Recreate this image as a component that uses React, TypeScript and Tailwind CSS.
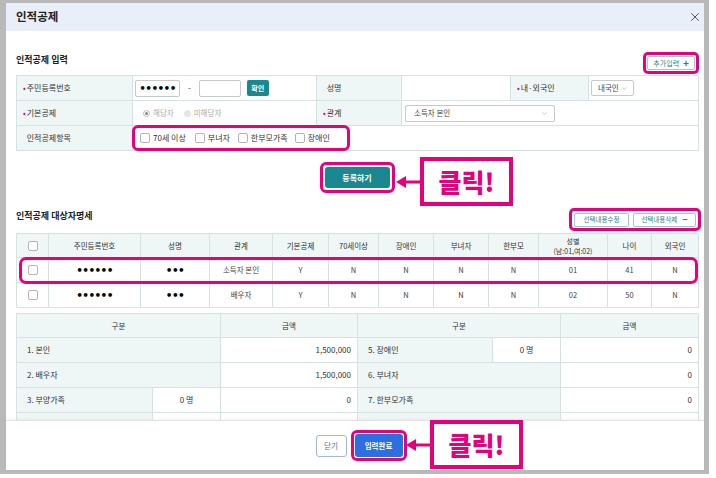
import { X, ChevronDown } from "lucide-react";

/* ── 인적공제 modal with tutorial callouts ── */

const FORM_COLS = "grid grid-cols-[116px_184px_85px_109px_78px_110px]";
const LIST_COLS = "grid grid-cols-[32px_92px_69px_63px_56px_50px_55px_55px_50px_69px_44px_47px]";
const SUM_COLS = "grid grid-cols-[136px_68px_137px_135px_68px_138px]";

function Label({ children, req = false, className = "" }: { children: React.ReactNode; req?: boolean; className?: string }) {
  return (
    <div className={`flex items-center h-[25px] bg-[#eef6f6] border-r border-b border-[#d6e2e2] pl-[6px] text-[8px] text-[#333] ${className}`}>
      <span className={`mr-[1px] text-[#e5007e] ${req ? "" : "invisible"}`}>•</span>
      {children}
    </div>
  );
}

function Cell({ children, className = "" }: { children?: React.ReactNode; className?: string }) {
  return (
    <div className={`flex items-center h-[25px] bg-white border-r border-b border-[#d6e2e2] ${className}`}>
      {children}
    </div>
  );
}

function Check({ className = "" }: { className?: string }) {
  return <span className={`block shrink-0 w-[10px] h-[10px] border border-[#b3b3b3] rounded-[2px] bg-white ${className}`} />;
}

function Dots({ n }: { n: number }) {
  return (
    <span className="font-['DejaVu_Sans',sans-serif] text-[10.5px] font-bold tracking-[-0.6px] leading-none text-black">
      {"•".repeat(n)}
    </span>
  );
}

function Arrow() {
  return (
    <svg width="24" height="14" viewBox="0 0 24 14">
      <polygon points="0,7 10,1 10,13" fill="#e5007e" />
      <rect x="9" y="5.5" width="15" height="3" fill="#e5007e" />
    </svg>
  );
}

function Callout({ className }: { className: string }) {
  return (
    <div className={`absolute flex items-center ${className}`}>
      <Arrow />
      <div className="w-[93px] h-[49px] border-[4px] border-[#e5007e] bg-white flex items-center justify-center text-[25px] font-black leading-none text-[#e5007e]">
        클릭!
      </div>
    </div>
  );
}

const listHead = ["주민등록번호", "성명", "관계", "기본공제", "70세이상", "장애인", "부녀자", "한부모"];

const people = [
  { rel: "소득자 본인", vals: ["Y", "N", "N", "N", "N", "01", "41", "N"] },
  { rel: "배우자", vals: ["Y", "N", "N", "N", "N", "02", "50", "N"] },
];

function ListRow({ p }: { p: (typeof people)[number] }) {
  const c = "flex items-center justify-center h-[25px] border-r border-b border-[#d6e2e2] text-[7.5px] text-[#444]";
  return (
    <div className={LIST_COLS}>
      <div className={c}><Check /></div>
      <div className={c}><Dots n={6} /></div>
      <div className={c}><Dots n={3} /></div>
      <div className={c}>{p.rel}</div>
      {p.vals.map((v, i) => (
        <div key={i} className={c}>{v}</div>
      ))}
    </div>
  );
}

export default function App() {
  const sh = "flex items-center justify-center h-[24px] bg-[#eef6f6] border-r border-b border-[#d6e2e2] text-[7.5px] text-[#333]";
  const sl = "flex items-center h-[25px] bg-[#eef6f6] border-r border-b border-[#d6e2e2] pl-[10px] text-[8px] text-[#333]";
  const sv = "flex items-center justify-end h-[25px] bg-white border-r border-b border-[#d6e2e2] pr-[6px] text-[8px] text-[#333]";
  const sc = "flex items-center justify-center h-[25px] bg-white border-r border-b border-[#d6e2e2] text-[8px] text-[#333]";

  return (
    <div className="relative w-[716px] h-[478px] bg-white overflow-hidden font-['Noto_Sans_CJK_KR','Noto_Sans',sans-serif]">
      <div className="w-[709px] h-[474px] flex flex-col border-l-[6px] border-t-[3px] border-r-[5px] border-b-[4px] border-[#b9b9b9]">
        {/* Header */}
        <div className="h-[28px] flex items-center justify-between bg-[#e8eff8] pl-[10px] pr-[2px]">
          <span className="text-[11.5px] font-bold text-[#222]">인적공제</span>
          <X size={14} strokeWidth={1.4} className="text-[#333]" />
        </div>

        {/* Body */}
        <div className="h-[389px] overflow-hidden pl-[10px] pr-[6px]">
          <div className="mt-[19px] h-[25px] flex justify-between">
            <span className="mt-[3px] text-[9px] font-bold leading-[14px] text-[#222]">인적공제 입력</span>
            <div className="-mr-[1px] mt-[2px] h-[22px] border-[3px] border-[#e5007e] rounded-[5px] p-px">
              <div className="h-[14px] px-[5px] flex items-center gap-[4px] border border-[#9fc9cd] rounded-[2px] bg-white text-[7px] text-[#26858e]">
                추가입력 <span className="text-[10px] font-bold leading-none">+</span>
              </div>
            </div>
          </div>

          {/* Input form */}
          <div className={`${FORM_COLS} border-t border-l border-[#d6e2e2]`}>
            <Label req>주민등록번호</Label>
            <Cell className="pl-[2px]">
              <div className="w-[45px] h-[17px] border border-[#c8c8c8] rounded-[2px] flex items-center justify-center">
                <Dots n={6} />
              </div>
              <span className="mx-[8px] text-[8px] text-[#333]">-</span>
              <div className="w-[42px] h-[17px] border border-[#c8c8c8] rounded-[2px]" />
              <div className="ml-[6px] w-[22px] h-[16px] rounded-[2px] bg-[#1b8790] flex items-center justify-center text-[7px] font-bold text-white">확인</div>
            </Cell>
            <Label>성명</Label>
            <Cell />
            <Label req>내·외국인</Label>
            <Cell className="pl-[2px]">
              <div className="w-[43px] h-[16px] border border-[#c8c8c8] rounded-[2px] flex items-center pl-[6px] gap-[2px] text-[7.5px] text-[#444]">
                내국인 <ChevronDown size={7} strokeWidth={1.5} className="text-[#888]" />
              </div>
            </Cell>

            <Label req>기본공제</Label>
            <Cell className="pl-[10px] text-[7.5px] text-[#aaa]">
              <span className="w-[7px] h-[7px] rounded-full border border-[#bbb] bg-white flex items-center justify-center">
                <span className="w-[3px] h-[3px] rounded-full bg-[#888]" />
              </span>
              <span className="ml-[3px]">해당자</span>
              <span className="ml-[10px] w-[7px] h-[7px] rounded-full bg-[#e6e6e6]" />
              <span className="ml-[3px]">미해당자</span>
            </Cell>
            <Label req>관계</Label>
            <Cell className="col-span-3 pl-[3px]">
              <div className="w-[150px] h-[17px] border border-[#c8c8c8] rounded-[2px] flex items-center justify-between pl-[8px] pr-[6px] text-[7.5px] text-[#444]">
                소득자 본인 <ChevronDown size={7} strokeWidth={1.5} className="text-[#888]" />
              </div>
            </Cell>

            <Label>인적공제항목</Label>
            <Cell className="col-span-5">
              <div className="-ml-px h-[26px] w-[218px] border-[3px] border-[#e5007e] rounded-[6px] flex items-center pl-[5px] text-[8px] text-[#333]">
                <Check />
                <span className="ml-[3px]">70세 이상</span>
                <Check className="ml-[9px]" />
                <span className="ml-[3px]">부녀자</span>
                <Check className="ml-[8px]" />
                <span className="ml-[3px]">한부모가족</span>
                <Check className="ml-[7px]" />
                <span className="ml-[3px]">장애인</span>
              </div>
            </Cell>
          </div>

          {/* Register */}
          <div className="mt-[11px] flex justify-center">
            <div className="h-[31px] border-[3px] border-[#e5007e] rounded-[6px] p-[2px]">
              <div className="h-[21px] w-[65px] rounded-[3px] bg-[#1b8790] flex items-center justify-center text-[8px] font-bold text-white">등록하기</div>
            </div>
          </div>

          {/* Target list */}
          <div className="mt-[15px] h-[23px] flex justify-between">
            <span className="mt-[1px] text-[9px] font-bold leading-[14px] text-[#222]">인적공제 대상자명세</span>
            <div className="-mr-[3px] h-[23px] border-[3px] border-[#e5007e] rounded-[5px] px-[2px] flex items-center gap-[4px]">
              <div className="h-[14px] w-[55px] flex items-center justify-center border border-[#9fc9cd] rounded-[2px] bg-white text-[6.5px] text-[#26858e]">선택내용수정</div>
              <div className="h-[14px] w-[63px] flex items-center justify-center gap-[5px] border border-[#9fc9cd] rounded-[2px] bg-white text-[6.5px] text-[#26858e]">
                선택내용삭제 <span className="text-[9px] font-bold leading-none">−</span>
              </div>
            </div>
          </div>

          <div className="mt-[2px] border-t border-l border-[#d6e2e2]">
            <div className={LIST_COLS}>
              <div className={sh}><Check /></div>
              {listHead.map((h) => (
                <div key={h} className={sh}>{h}</div>
              ))}
              <div className="flex flex-col items-center justify-center h-[24px] bg-[#eef6f6] border-r border-b border-[#d6e2e2] text-[7px] leading-[10px] text-[#333]">
                <span>성별</span>
                <span>(남:01,여:02)</span>
              </div>
              <div className={sh}>나이</div>
              <div className={sh}>외국인</div>
            </div>
            <div className="relative">
              <ListRow p={people[0]} />
              <div className="absolute left-[2px] right-0 -top-px h-[27px] border-[3px] border-[#e5007e] rounded-[7px] pointer-events-none" />
            </div>
            <ListRow p={people[1]} />
          </div>

          {/* Summary */}
          <div className={`${SUM_COLS} mt-[5px] border-t border-l border-[#d6e2e2]`}>
            <div className={`${sh} col-span-2`}>구분</div>
            <div className={sh}>금액</div>
            <div className={`${sh} col-span-2`}>구분</div>
            <div className={sh}>금액</div>

            <div className={`${sl} col-span-2`}>1. 본인</div>
            <div className={sv}>1,500,000</div>
            <div className={sl}>5. 장애인</div>
            <div className={sc}>0 명</div>
            <div className={sv}>0</div>

            <div className={`${sl} col-span-2`}>2. 배우자</div>
            <div className={sv}>1,500,000</div>
            <div className={`${sl} col-span-2`}>6. 부녀자</div>
            <div className={sv}>0</div>

            <div className={sl}>3. 부양가족</div>
            <div className={sc}>0 명</div>
            <div className={sv}>0</div>
            <div className={`${sl} col-span-2`}>7. 한부모가족</div>
            <div className={sv}>0</div>

            <div className={sl} />
            <div className={sc} />
            <div className={sv} />
            <div className={`${sl} col-span-2`} />
            <div className={sv} />
          </div>
        </div>

        {/* Footer */}
        <div className="flex-1 flex items-center justify-center gap-[4px] pl-[12px] border-t border-[#e3e3e3] shadow-[0_-1px_3px_rgba(0,0,0,0.05)]">
          <div className="w-[31px] h-[22px] border border-[#a3b7da] rounded-[3px] bg-white flex items-center justify-center text-[7.5px] text-[#4b6fae]">닫기</div>
          <div className="h-[31px] border-[3px] border-[#e5007e] rounded-[6px] p-px">
            <div className="w-[48px] h-[23px] rounded-[3px] bg-[#2b6fe0] flex items-center justify-center text-[7.5px] font-bold text-white">입력완료</div>
          </div>
        </div>
      </div>

      <Callout className="left-[396px] top-[157px]" />
      <Callout className="left-[406px] top-[420px]" />
    </div>
  );
}
